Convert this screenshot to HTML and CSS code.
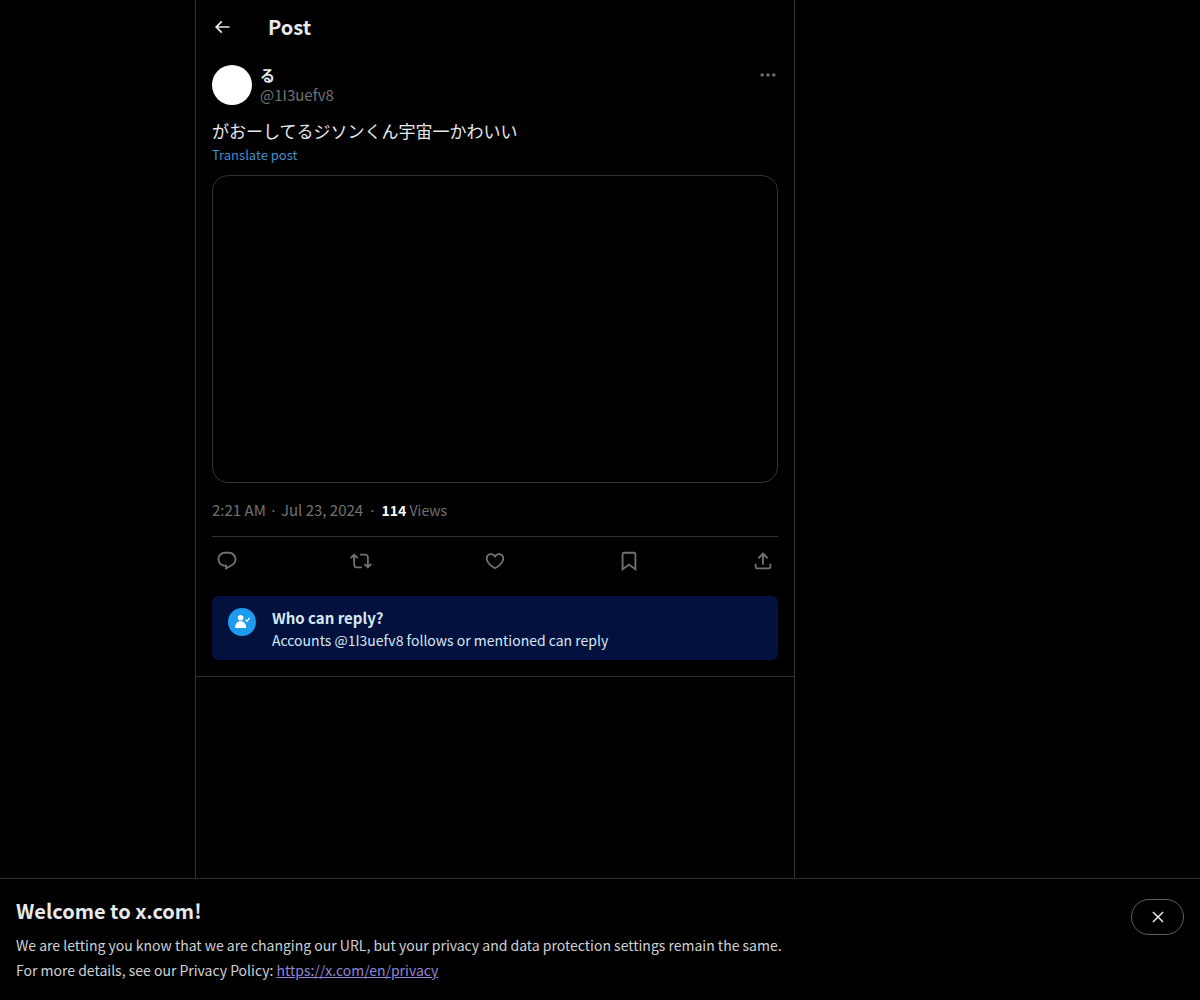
FILE: index.html
```html
<!DOCTYPE html>
<html lang="en">
<head>
  <meta charset="UTF-8">
  <meta name="viewport" content="width=device-width, initial-scale=1">
  <title>Post / X</title>
  <link rel="stylesheet" href="styles.css">
</head>
<body>

  <div class="layout">
    <main class="column">
      <header class="topbar">
        <button class="icon-btn back" aria-label="Back">
          <svg viewBox="0 0 24 24"><path d="M7.414 13l5.043 5.04-1.414 1.42L3.586 12l7.457-7.46 1.414 1.42L7.414 11H21v2H7.414z"/></svg>
        </button>
        <h1>Post</h1>
      </header>

      <article class="post">
        <div class="author">
          <div class="avatar"></div>
          <div class="names">
            <a class="name" href="#" lang="ja">る</a>
            <a class="handle" href="#">@1I3uefv8</a>
          </div>
          <button class="icon-btn more" aria-label="More">
            <svg viewBox="0 0 24 24"><path d="M3 12c0-1.1.9-2 2-2s2 .9 2 2-.9 2-2 2-2-.9-2-2zm9 2c1.1 0 2-.9 2-2s-.9-2-2-2-2 .9-2 2 .9 2 2 2zm7 0c1.1 0 2-.9 2-2s-.9-2-2-2-2 .9-2 2 .9 2 2 2z"/></svg>
          </button>
        </div>

        <p class="text" lang="ja">がおーしてるジソンくん宇宙一かわいい</p>
        <button class="translate">Translate post</button>

        <div class="media"></div>

        <div class="meta">
          <a href="#">2:21 AM · Jul 23, 2024</a><span class="dot">·</span><span class="views"><strong>114</strong> Views</span>
        </div>

        <div class="actions">
          <button class="icon-btn" aria-label="Reply">
            <svg viewBox="0 0 24 24"><path d="M1.751 10c0-4.42 3.584-8 8.005-8h4.366c4.49 0 8.129 3.64 8.129 8.13 0 2.96-1.607 5.68-4.196 7.11l-8.054 4.46v-3.69h-.067c-4.49.1-8.183-3.51-8.183-8.01zm8.005-6c-3.317 0-6.005 2.69-6.005 6 0 3.37 2.77 6.08 6.138 6.01l.351-.01h1.761v2.3l5.087-2.81c1.951-1.08 3.163-3.13 3.163-5.36 0-3.39-2.744-6.13-6.129-6.13H9.756z"/></svg>
          </button>
          <button class="icon-btn" aria-label="Repost">
            <svg viewBox="0 0 24 24"><path d="M4.5 3.88l4.432 4.14-1.364 1.46L5.5 7.55V16c0 1.1.896 2 2 2H13v2H7.5c-2.209 0-4-1.79-4-4V7.55L1.432 9.48.068 8.02 4.5 3.88zM16.5 6H11V4h5.5c2.209 0 4 1.79 4 4v8.45l2.068-1.93 1.364 1.46-4.432 4.14-4.432-4.14 1.364-1.46 2.068 1.93V8c0-1.1-.896-2-2-2z"/></svg>
          </button>
          <button class="icon-btn" aria-label="Like">
            <svg viewBox="0 0 24 24"><path d="M16.697 5.5c-1.222-.06-2.679.51-3.89 2.16l-.805 1.09-.806-1.09C9.984 6.01 8.526 5.44 7.304 5.5c-1.243.07-2.349.78-2.91 1.91-.552 1.12-.633 2.78.479 4.82 1.074 1.97 3.257 4.27 7.129 6.61 3.87-2.34 6.052-4.64 7.126-6.61 1.111-2.04 1.03-3.7.477-4.82-.561-1.13-1.666-1.84-2.908-1.91zm4.187 7.69c-1.351 2.48-4.001 5.12-8.379 7.67l-.503.3-.504-.3c-4.379-2.55-7.029-5.19-8.382-7.67-1.36-2.5-1.41-4.86-.514-6.67.887-1.79 2.647-2.91 4.601-3.01 1.651-.09 3.368.56 4.798 2.01 1.429-1.45 3.146-2.1 4.796-2.01 1.954.1 3.714 1.22 4.601 3.01.896 1.81.846 4.17-.514 6.67z"/></svg>
          </button>
          <button class="icon-btn" aria-label="Bookmark">
            <svg viewBox="0 0 24 24"><path d="M4 4.5C4 3.12 5.119 2 6.5 2h11C18.881 2 20 3.12 20 4.5v18.44l-8-5.71-8 5.71V4.5zM6.5 4c-.276 0-.5.22-.5.5v14.56l6-4.29 6 4.29V4.5c0-.28-.224-.5-.5-.5h-11z"/></svg>
          </button>
          <button class="icon-btn" aria-label="Share">
            <svg viewBox="0 0 24 24"><path d="M12 2.59l5.7 5.7-1.41 1.42L13 6.41V16h-2V6.41l-3.3 3.3-1.41-1.42L12 2.59zM21 15l-.02 3.51c0 1.38-1.12 2.49-2.5 2.49H5.5C4.11 21 3 19.88 3 18.5V15h2v3.5c0 .28.22.5.5.5h12.98c.28 0 .5-.22.5-.5L19 15h2z"/></svg>
          </button>
        </div>

        <div class="reply-info">
          <div class="reply-badge">
            <svg viewBox="0 0 28 28">
              <circle cx="12.6" cy="9.8" r="2.8"/>
              <path d="M7 20c0-4.4 2.1-6.8 5.6-6.8s5.6 2.4 5.6 6.8z"/>
              <path class="check" d="M17.6 11.8l1.4 1.5 2.6-3.4"/>
            </svg>
          </div>
          <div>
            <h2>Who can reply?</h2>
            <p>Accounts @1I3uefv8 follows or mentioned can reply</p>
          </div>
        </div>
      </article>
    </main>
  </div>

  <section class="banner">
    <div class="banner-text">
      <h2>Welcome to x.com!</h2>
      <p>We are letting you know that we are changing our URL, but your privacy and data protection settings remain the same.</p>
      <p>For more details, see our Privacy Policy: <a href="#">https://x.com/en/privacy</a></p>
    </div>
    <button class="close" aria-label="Close">
      <svg viewBox="0 0 24 24"><path d="M10.59 12L4.54 5.96l1.42-1.42L12 10.59l6.04-6.05 1.42 1.42L13.41 12l6.05 6.04-1.42 1.42L12 13.41l-6.04 6.05-1.42-1.42L10.59 12z"/></svg>
    </button>
  </section>

</body>
</html>
```
FILE: styles.css
```css
* { box-sizing: border-box; }
body { margin: 0; background: #000; color: #e7e9ea; font-family: "Noto Sans CJK JP", "Noto Sans", sans-serif; font-size: 15px; line-height: 20px; }
h1, h2, p { margin: 0; }
a { color: inherit; text-decoration: none; }
button { font: inherit; color: inherit; background: none; border: none; padding: 0; cursor: pointer; }
svg { display: block; fill: currentColor; }

.layout { display: flex; min-height: 100vh; padding-left: 195px; }
.column { width: 100%; max-width: 600px; border-left: 1px solid #333; border-right: 1px solid #333; }

.topbar { display: flex; align-items: center; height: 53px; padding: 0 16px; }
.topbar h1 { font-size: 20px; line-height: 24px; margin-left: 36px; }
.icon-btn svg { width: 22px; height: 22px; }

.post { padding: 12px 16px 16px; border-bottom: 1px solid #333; }
.author { display: flex; align-items: flex-start; gap: 8px; }
.avatar { width: 40px; height: 40px; border-radius: 50%; background: #fff; }
.names { display: flex; flex-direction: column; flex: 1; align-items: flex-start; }
.name { font-weight: bold; }
.handle, .icon-btn, .meta { color: #717273; }
.back { color: #e7e9ea; }
.back svg, .more svg { width: 20px; height: 20px; }

.text { margin-top: 14px; font-size: 17px; line-height: 24px; }
.translate { display: block; margin-top: 4px; font-size: 13px; line-height: 16px; color: #4490cc; }
.media { height: 308px; margin-top: 12px; border: 1px solid #333; border-radius: 16px; }

.meta { padding: 17px 0 16px; border-bottom: 1px solid #333; }
.views { font-size: 14px; }
.views strong { color: #fff; }
.dot { margin: 0 5px; }

.actions { display: flex; justify-content: space-between; align-items: center; height: 47px; padding: 0 4px; }

.reply-info { display: flex; gap: 16px; margin-top: 12px; padding: 12px 16px 8px; background: #02113d; border-radius: 6px; color: #d7e8f5; }
.reply-badge { width: 28px; height: 28px; border-radius: 50%; background: #1d9bf0; color: #fff; }
.reply-badge .check { fill: none; stroke: currentColor; stroke-width: 1.3; }
.reply-info h2 { font-size: 15px; line-height: 20px; }
.reply-info p { font-size: 14px; line-height: 24px; }

.banner { position: fixed; left: 0; right: 0; bottom: 0; display: flex; justify-content: space-between; align-items: flex-start; padding: 20px 16px 17px; background: #000; border-top: 1px solid #333; }
.banner h2 { font-size: 20px; line-height: 24px; margin-bottom: 10px; }
.banner p { font-size: 14px; line-height: 25px; color: #d0d2d3; }
.banner a { color: #9085d8; text-decoration: underline; }
.close { display: flex; align-items: center; justify-content: center; width: 53px; height: 36px; border: 1px solid #5c6062; border-radius: 18px; }
.close svg { width: 18px; height: 18px; }
```
